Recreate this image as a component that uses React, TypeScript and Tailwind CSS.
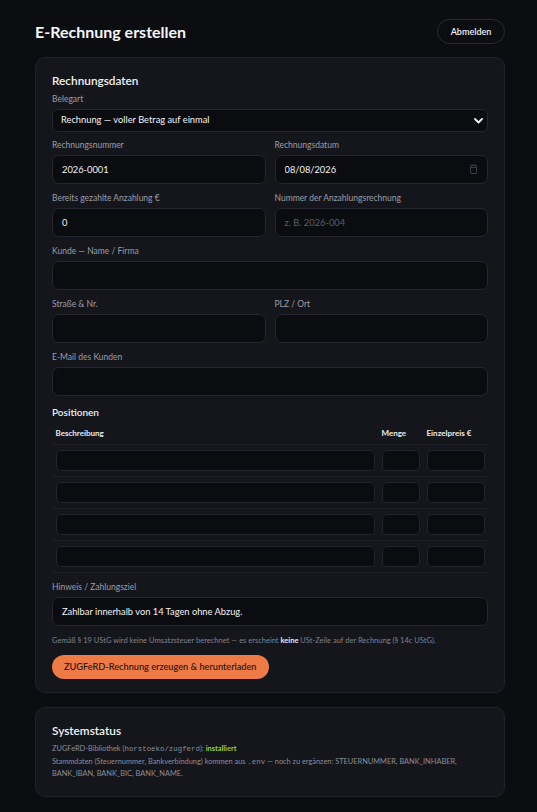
import React from "react";

const labelCls = "block text-[8.5px] leading-[11px] text-[#9a9da7] mb-[4px]";
const inputCls =
  "block w-full h-[28.5px] rounded-[7px] border border-[#25262e] bg-[#0b0c10] px-[9px] text-[9.3px] text-[#f2f3f5] outline-none placeholder:text-[#5c5f69]";
const cellInputCls =
  "block w-full h-[21px] rounded-[5px] border border-[#24252c] bg-[#0b0c10] px-[6px] text-[9px] text-[#f2f3f5] outline-none";
const thCls = "px-[3.5px] py-[5px] text-left align-middle text-[8px] leading-[11px] font-bold text-[#e8eaee]";
const tdCls = "px-[3.5px] py-[5px] align-middle";
const mono = { fontFamily: "'Liberation Mono', 'DejaVu Sans Mono', monospace" };

function Field({
  label,
  value,
  placeholder,
  icon,
}: {
  label: string;
  value?: string;
  placeholder?: string;
  icon?: React.ReactNode;
}) {
  return (
    <div>
      <label className={labelCls}>{label}</label>
      <div className="relative">
        <input className={inputCls} defaultValue={value} placeholder={placeholder} />
        {icon && <span className="absolute right-[11px] top-[9px] text-[#3c3e47]">{icon}</span>}
      </div>
    </div>
  );
}

function CalendarGlyph() {
  return (
    <svg width="7" height="10" viewBox="0 0 7 10" fill="none" stroke="currentColor" strokeWidth="1">
      <rect x="0.5" y="1.5" width="6" height="8" rx="0.5" />
      <line x1="0.5" y1="3.5" x2="6.5" y2="3.5" />
      <line x1="2" y1="0" x2="2" y2="2" />
      <line x1="5" y1="0" x2="5" y2="2" />
    </svg>
  );
}

const rows = [0, 1, 2, 3];

export default function App() {
  return (
    <div
      className="min-h-screen bg-[#0c0d11] pl-[35px] pr-[32px] pb-[15px] text-[#f2f3f5]"
      style={{ fontFamily: "Lato, 'Noto Sans', 'Liberation Sans', sans-serif" }}
    >
      <header className="flex items-center justify-between pt-[19px]">
        <h1 className="text-[16px] font-bold leading-[25px] text-[#f4f5f7]">E-Rechnung erstellen</h1>
        <button className="h-[25px] w-[68px] rounded-full border border-[#2a2b33] text-[9px] font-semibold text-[#eef0f3]">
          Abmelden
        </button>
      </header>

      <section className="mt-[13px] rounded-[10px] border border-[#22232a] bg-[#15161c] px-[16px] pt-[15px] pb-[13px]">
        <h2 className="text-[11.8px] font-semibold leading-[16px] text-[#f1f2f4] mb-[4.5px]">Rechnungsdaten</h2>

        <div className="flex flex-col gap-[9.5px]">
          <div className="mb-[-0.7px]">
            <label className={labelCls}>Belegart</label>
            <div className="relative">
              <select className="block w-full h-[23px] appearance-none rounded-[6px] border border-[#25262e] bg-[#0b0c10] px-[8px] text-[9.3px] text-[#f2f3f5] outline-none">
                <option>Rechnung — voller Betrag auf einmal</option>
                <option>Anzahlungsrechnung</option>
                <option>Schlussrechnung</option>
              </select>
              <svg
                className="pointer-events-none absolute right-[5px] top-[9px]"
                width="9"
                height="6"
                viewBox="0 0 9 6"
                fill="none"
                stroke="#f2f3f5"
                strokeWidth="1.8"
                strokeLinecap="round"
                strokeLinejoin="round"
              >
                <polyline points="1,1 4.5,4.5 8,1" />
              </svg>
            </div>
          </div>

          <div className="grid grid-cols-2 gap-x-[9px]">
            <Field label="Rechnungsnummer" value="2026-0001" />
            <Field label="Rechnungsdatum" value="08/08/2026" icon={<CalendarGlyph />} />
          </div>

          <div className="grid grid-cols-2 gap-x-[9px]">
            <Field label="Bereits gezahlte Anzahlung €" value="0" />
            <Field label="Nummer der Anzahlungsrechnung" placeholder="z. B. 2026-004" />
          </div>

          <Field label="Kunde — Name / Firma" />

          <div className="grid grid-cols-2 gap-x-[9px]">
            <Field label="Straße & Nr." />
            <Field label="PLZ / Ort" />
          </div>

          <Field label="E-Mail des Kunden" />

          <div className="mt-[1px]">
            <h3 className="text-[10px] font-semibold leading-[13px] text-[#eceef1] mb-[3.5px]">Positionen</h3>
            <table className="w-full border-collapse">
              <thead>
                <tr className="border-b border-[#202128]">
                  <th className={thCls}>Beschreibung</th>
                  <th className={`w-[45px] ${thCls}`}>Menge</th>
                  <th className={`w-[65px] ${thCls}`}>Einzelpreis €</th>
                </tr>
              </thead>
              <tbody>
                {rows.map((r) => (
                  <tr key={r} className="border-b border-[#202128]">
                    <td className={tdCls}>
                      <input className={cellInputCls} />
                    </td>
                    <td className={tdCls}>
                      <input className={cellInputCls} />
                    </td>
                    <td className={tdCls}>
                      <input className={cellInputCls} />
                    </td>
                  </tr>
                ))}
              </tbody>
            </table>
          </div>

          <Field label="Hinweis / Zahlungsziel" value="Zahlbar innerhalb von 14 Tagen ohne Abzug." />

          <p className="text-[7.5px] leading-[11px] text-[#7f828c]">
            Gemäß § 19 UStG wird keine Umsatzsteuer berechnet — es erscheint{" "}
            <strong className="font-bold text-[#e6e8ec]">keine</strong> USt-Zeile auf der Rechnung (§ 14c UStG).
          </p>

          <div className="-mt-[1px]">
            <button className="block h-[24px] rounded-full bg-[#ee7a45] px-[12px] text-[9.2px] font-medium text-[#1b130f]">
              ZUGFeRD-Rechnung erzeugen &amp; herunterladen
            </button>
          </div>
        </div>
      </section>

      <section className="mt-[14px] rounded-[10px] border border-[#22232a] bg-[#15161c] px-[16px] pt-[15px] pb-[15px]">
        <h2 className="text-[11.8px] font-semibold leading-[16px] text-[#f1f2f4] mb-[4px]">Systemstatus</h2>
        <div className="text-[7.4px] leading-[12.8px] text-[#8a8d97]">
          <p>
            ZUGFeRD-Bibliothek (<code style={mono}>horstoeko/zugferd</code>):{" "}
            <strong className="font-bold text-[#9ccc3c]">installiert</strong>
          </p>
          <p>
            Stammdaten (Steuernummer, Bankverbindung) kommen aus <code style={mono}>.env</code> — noch zu ergänzen:
            STEUERNUMMER, BANK_INHABER, BANK_IBAN, BANK_BIC, BANK_NAME.
          </p>
        </div>
      </section>
    </div>
  );
}
